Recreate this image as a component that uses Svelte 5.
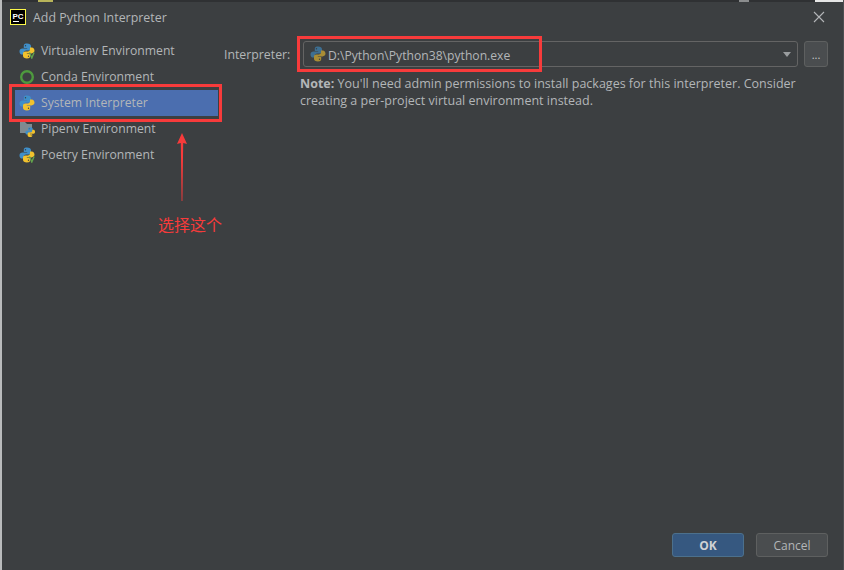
<script>
  const envs = [
    { name: 'Virtualenv Environment', icon: 'venv' },
    { name: 'Conda Environment', icon: 'conda' },
    { name: 'System Interpreter', icon: 'python', selected: true },
    { name: 'Pipenv Environment', icon: 'pipenv' },
    { name: 'Poetry Environment', icon: 'venv' }
  ];
</script>

{#snippet snake(x, y, scale, dim)}
  <g transform="translate({x} {y}) scale({scale})" opacity={dim ? 0.6 : 1}>
    <path d="M8 .5C4.800 .5 4.800 2 4.800 3.400V5h3.400v.6H3.400C1.800 5.600 .5 6.600 .5 8.400s1.100 3.200 2.600 3.200H5V9.600c0-1.300 1-2.200 2.200-2.200h2.600c1.100 0 2.200-.9 2.200-2V3.200C12 1.500 10.400 .5 8 .5z" fill="#3f8fc9"/>
    <path d="M8 15.500c3.200 0 3.200-1.500 3.200-2.900V11H7.800v-.6h4.800c1.600 0 2.900-1 2.900-2.800s-1.100-3.200-2.600-3.200H11v1.900c0 1.300-1 2.200-2.200 2.200H6.200c-1.100 0-2.200.9-2.200 2v2.200c0 1.700 1.600 2.800 4 2.800z" fill="#f1c22e"/>
    <circle cx="6.500" cy="2.700" r=".7" fill="#3c3f41"/>
    <circle cx="9.500" cy="13.300" r=".7" fill="#3c3f41"/>
  </g>
{/snippet}

<div class="dialog">
  <div class="behind">
    <i class="bitLogo"></i>
    <i class="bitGrey"></i>
    <i class="bitWhite"></i>
  </div>

  <header class="title">
    <svg class="logo" width="16" height="16" viewBox="0 0 16 16">
      <rect x=".5" y=".5" width="15" height="15" fill="#000" stroke="#fcf84a"/>
      <text x="2.500" y="9.500" class="logoText">PC</text>
      <rect x="3" y="12" width="6" height="1" fill="#fff"/>
    </svg>
    <span>Add Python Interpreter</span>
    <svg class="close" width="12" height="12" viewBox="0 0 12 12">
      <path d="M1 1l10 10M11 1L1 11" stroke="#b4b6b8" stroke-width="1.100" fill="none"/>
    </svg>
  </header>

  <div class="body">
    <ul class="envs">
      {#each envs as env}
        <li class:selected={env.selected}>
          <svg width="16" height="16" viewBox="0 0 16 16">
            {#if env.icon === 'conda'}
              <circle cx="8" cy="8" r="5.800" fill="none" stroke="#4e9a3e" stroke-width="2.400"/>
            {:else if env.icon === 'pipenv'}
              <path d="M1 1h5l2 2h5v9H1z" fill="#7f8b91"/>
              {@render snake(6, 6, 0.65)}
            {:else}
              {@render snake(0, 0, 1)}
              {#if env.icon === 'venv'}
                <path d="M10.500 9.500l2.300 5.500 2.300-5.500" fill="none" stroke="#62a34c" stroke-width="1.400"/>
              {/if}
            {/if}
          </svg>
          <span>{env.name}</span>
        </li>
      {/each}
    </ul>

    <section class="form">
      <div class="row">
        <label for="interp">Interpreter:</label>
        <div class="combo" id="interp">
          <svg width="16" height="16" viewBox="0 0 16 16">{@render snake(0, 0, 1, true)}</svg>
          <span class="path">D:\Python\Python38\python.exe</span>
          <i class="caret"></i>
        </div>
        <button class="more">...</button>
      </div>
      <p class="note"><b>Note:</b> You'll need admin permissions to install packages for this interpreter. Consider creating a per-project virtual environment instead.</p>
    </section>
  </div>

  <footer>
    <button class="ok">OK</button>
    <button class="cancel">Cancel</button>
  </footer>

  <!-- red annotations drawn on top of the screenshot -->
  <div class="mark markEnv"></div>
  <div class="mark markPath"></div>
  <svg class="arrow" width="16" height="68" viewBox="0 0 16 68">
    <path d="M8 0L13 11L9.200 10L8.400 68H7.600L6.800 10L3 11z" fill="#f73b3b"/>
  </svg>
  <div class="hint">选择这个</div>
</div>

<style>
  :global(body) {
    margin: 0;
    background: #3c3f41;
  }

  .dialog {
    position: relative;
    width: 844px;
    height: 570px;
    box-sizing: border-box;
    display: flex;
    flex-direction: column;
    overflow: hidden;
    background: #3c3f41;
    border-left: 2px solid #b9bbbc;
    border-right: 1px solid #4c4f51;
    color: #b3b6b8;
    font: 12.200px/16px "Open Sans", "Noto Sans", sans-serif;
  }

  /* sliver of the IDE window showing above the dialog */
  .behind {
    position: relative;
    height: 2px;
    flex: none;
    background: #2f3133;
  }

  .behind i {
    position: absolute;
    top: 0;
    height: 2px;
  }

  .bitLogo {
    left: 36px;
    width: 15px;
    background: #b8b45a;
  }

  .bitGrey {
    left: 737px;
    width: 10px;
    background: #8b8d8e;
  }

  .bitWhite {
    left: 813px;
    right: -1px;
    background: #e6e6e6;
  }

  .title {
    height: 31px;
    flex: none;
    display: flex;
    align-items: center;
    padding: 0 18px 2px 8px;
    font-size: 12.400px;
  }

  .title span {
    margin-left: 7px;
    flex: 1;
  }

  .title svg {
    margin-top: -2px;
  }

  .logoText {
    font: bold 8px "Liberation Sans", sans-serif;
    fill: #fff;
  }

  .body {
    flex: 1;
    display: flex;
    min-height: 0;
  }

  .envs {
    list-style: none;
    margin: 3px 0 0;
    padding: 0 0 0 13px;
    width: 217px;
    flex: none;
    box-sizing: border-box;
  }

  .envs li {
    height: 26px;
    width: 203px;
    box-sizing: border-box;
    display: flex;
    align-items: center;
    gap: 6px;
    padding-left: 4px;
  }

  .envs li.selected {
    background: #4b6eaf;
  }

  .form {
    flex: 1;
    padding: 6px 15px 0 5px;
  }

  .row {
    display: flex;
    align-items: center;
    gap: 6px;
    font-size: 12.300px;
  }

  .row label {
    width: 73px;
    flex: none;
    white-space: nowrap;
    padding-top: 2px;
  }

  .combo {
    flex: 1;
    height: 26px;
    display: flex;
    align-items: center;
    padding: 0 7px 0 6px;
    gap: 2px;
    box-sizing: border-box;
    border: 1px solid #646464;
    border-radius: 3px;
    background: #3c3f41;
  }

  .path {
    flex: 1;
    font-size: 12.150px;
    padding-top: 3px;
  }

  .caret {
    width: 0;
    height: 0;
    margin-right: -1px;
    border-left: 4.500px solid transparent;
    border-right: 4.500px solid transparent;
    border-top: 5.500px solid #9a9d9f;
  }

  .more {
    width: 24px;
    height: 26px;
    padding: 0;
    border: 1px solid #5e6060;
    border-radius: 3px;
    background: #4a4d4f;
    color: #c9c9c9;
    font: 11px "Open Sans", sans-serif;
  }

  .note {
    margin: 8px 0 0 76px;
    line-height: 17px;
    width: 510px;
    font-size: 12.500px;
  }

  footer {
    flex: none;
    height: 37px;
    display: flex;
    justify-content: flex-end;
    gap: 12px;
    padding-right: 15px;
    box-sizing: border-box;
  }

  footer button {
    width: 72px;
    height: 24px;
    border-radius: 3px;
    font: 12px "Open Sans", sans-serif;
    padding: 0;
  }

  .ok {
    background: #365880;
    border: 1px solid #4c708c;
    color: #d0d2d4;
    font-weight: bold !important;
  }

  .cancel {
    background: #4a4d4f;
    border: 1px solid #5e6060;
    color: #b3b6b8;
  }

  .mark {
    position: absolute;
    box-sizing: border-box;
    border: 3px solid #f73b3b;
  }

  .markEnv {
    left: 7px;
    top: 84px;
    width: 213px;
    height: 38px;
  }

  .markPath {
    left: 295px;
    top: 36px;
    width: 245px;
    height: 36px;
  }

  .arrow {
    position: absolute;
    left: 172px;
    top: 133px;
  }

  .hint {
    position: absolute;
    left: 156px;
    top: 214px;
    color: #f73b3b;
    font: 16px/20px "Noto Sans CJK SC", sans-serif;
  }
</style>
